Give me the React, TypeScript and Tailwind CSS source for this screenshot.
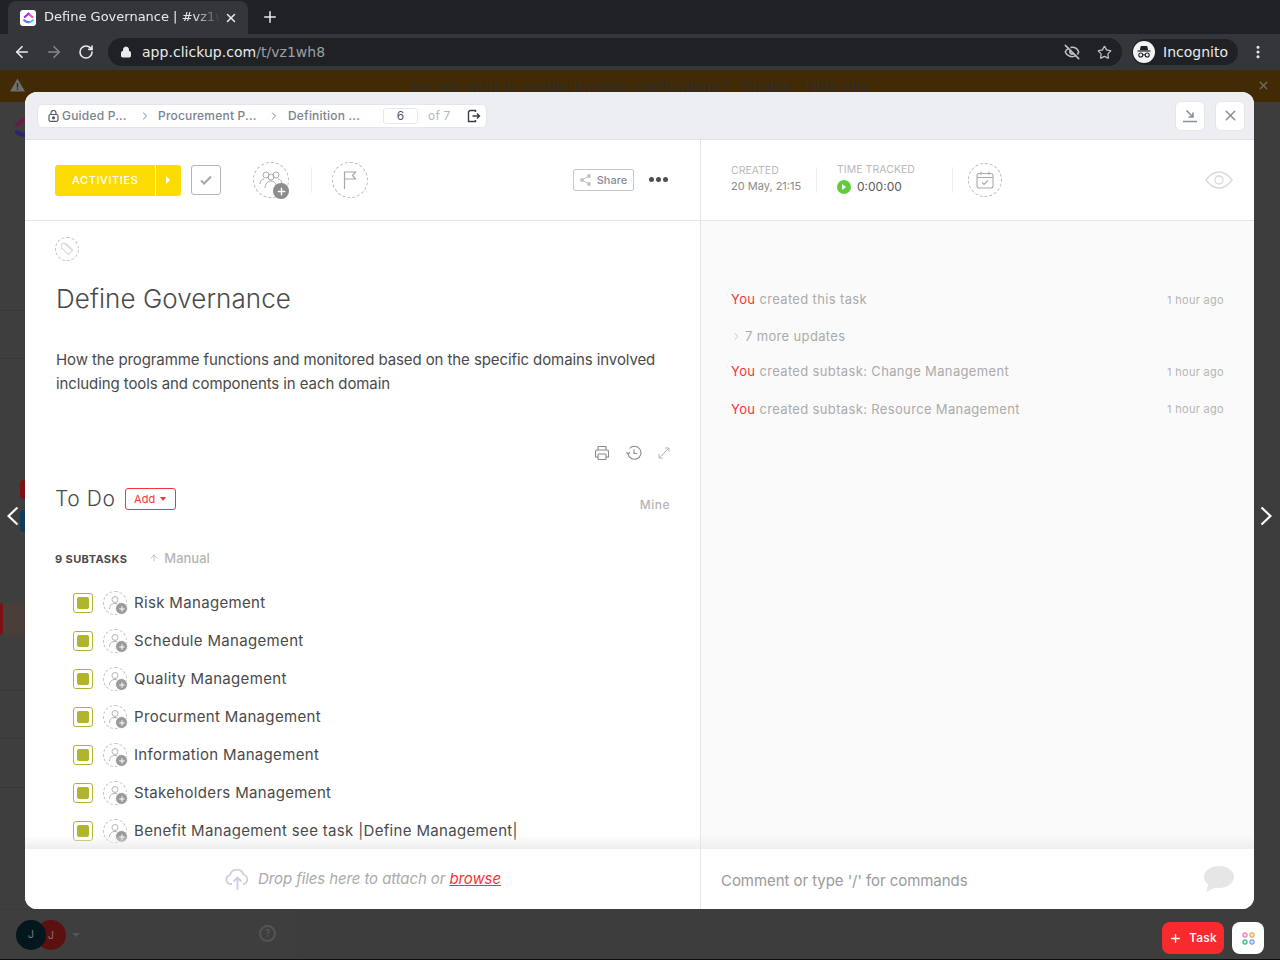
import { ArrowLeft, ArrowRight, ArrowUp, ChevronRight, EyeOff, Lock, MoreVertical, Plus, RotateCw, Star, X } from 'lucide-react';

const font = 'font-["Inter","Liberation_Sans",sans-serif]';

const subtasks = [
  'Risk Management',
  'Schedule Management',
  'Quality Management',
  'Procurment Management',
  'Information Management',
  'Stakeholders Management',
  'Benefit Management see task |Define Management|',
  'Cost Management',
];

function ClickUpLogo({ size }: { size: number }) {
  return (
    <svg width={size} height={size} viewBox="0 0 24 24" fill="none" strokeWidth="4" strokeLinecap="round" strokeLinejoin="round">
      <path d="M12 5 L19 11" stroke="#ff4f8b" />
      <path d="M5 11 L12 5" stroke="#8930fd" />
      <path d="M12 20.500 C15 20.500 18 19 20 17" stroke="#49ccf9" />
      <path d="M4 17 C6 19 9 20.500 12 20.500" stroke="#7b68ee" />
    </svg>
  );
}

function IncognitoIcon() {
  return (
    <svg width="22" height="22" viewBox="0 0 22 22">
      <circle cx="11" cy="11" r="11" fill="#f1f3f4" />
      <path d="M7.800 5h6.400l1 4.200H6.800z" fill="#202124" />
      <path d="M4.500 10h13" stroke="#202124" strokeWidth="1.200" />
      <circle cx="7.800" cy="14" r="2" fill="none" stroke="#202124" strokeWidth="1.100" />
      <circle cx="14.200" cy="14" r="2" fill="none" stroke="#202124" strokeWidth="1.100" />
      <path d="M9.800 13.800h2.400" stroke="#202124" strokeWidth="1" />
    </svg>
  );
}

function PersonPlus() {
  return (
    <div className="w-6 h-6 rounded-full border border-dashed border-[#c4c4c4] relative flex-shrink-0">
      <svg className="absolute left-[4px] top-[3px]" width="14" height="16" viewBox="0 0 14 16" fill="none" stroke="#b5b5b5" strokeWidth="1">
        <circle cx="7" cy="4.500" r="3" />
        <path d="M1.500 14c0-4 2.500-5.500 5.500-5.500 1 0 2 .2 2.600.6" />
      </svg>
      <div className="absolute -right-[1px] bottom-0 w-[11px] h-[11px] rounded-full bg-[#9a9a9a] flex items-center justify-center border border-white box-content -m-px">
        <Plus size={8} strokeWidth={3} color="#ffffff" />
      </div>
    </div>
  );
}

function SubtaskRow({ name }: { name: string }) {
  return (
    <div className="h-[38px] flex items-center pl-[48px] flex-shrink-0">
      <div className="w-5 h-5 rounded-[3px] border border-[#b1b52d] flex items-center justify-center flex-shrink-0">
        <div className="w-3 h-3 rounded-[2px] bg-[#b1b52d]" />
      </div>
      <div className="ml-[10px]">
        <PersonPlus />
      </div>
      <span className="ml-[7px] text-[15px] text-[#4a4a4a] whitespace-nowrap tracking-[0.33px]">{name}</span>
    </div>
  );
}

function ActivityRow({ name, time }: { name: string; time?: string }) {
  return (
    <div className="flex items-center justify-between text-[13px]">
      <div className="tracking-[0.35px]">
        <span className="text-[#f8333a]">You</span>
        <span className="text-[#ababab]"> {name}</span>
      </div>
      {time && <span className="text-[11px] text-[#b5b5b5] tracking-[0.3px]">{time}</span>}
    </div>
  );
}

function BrowserChrome() {
  return (
    <div className="flex-shrink-0 font-['DejaVu_Sans',sans-serif]">
      <div className="h-[34px] bg-[#202124] flex items-end pl-2">
        <div className="w-[240px] h-[33px] bg-[#35363a] rounded-t-[8px] flex items-center pl-3 pr-[10px]">
          <div className="w-4 h-4 rounded-[3px] bg-white flex items-center justify-center flex-shrink-0">
            <ClickUpLogo size={13} />
          </div>
          <span className="ml-2 mb-[2px] text-[13px] text-[#e8eaed] whitespace-nowrap overflow-hidden w-[176px] [mask-image:linear-gradient(to_right,black_85%,transparent)]">Define Governance | #vz1w</span>
          <X size={14} color="#e8eaed" strokeWidth={2.5} className="ml-auto" />
        </div>
        <Plus size={18} color="#e8eaed" strokeWidth={2} className="ml-[13px] mb-2" />
      </div>
      <div className="h-[36px] bg-[#35363a] flex items-center">
        <ArrowLeft size={18} color="#e8eaed" strokeWidth={2.2} className="ml-[13px]" />
        <ArrowRight size={18} color="#83868a" strokeWidth={2.2} className="ml-[14px]" />
        <RotateCw size={16} color="#e8eaed" strokeWidth={2.4} className="ml-[15px]" />
        <div className="ml-[14px] w-[1014px] h-7 rounded-full bg-[#202124] flex items-center pl-3 pr-[10px]">
          <Lock size={12} color="#e8eaed" fill="#e8eaed" />
          <span className="ml-[10px] text-[14px] text-[#e8eaed] whitespace-nowrap tracking-[0.03px]">app.clickup.com<span className="text-[#9aa0a6]">/t/vz1wh8</span></span>
          <EyeOff size={16} color="#bdc1c6" strokeWidth={2.4} className="ml-auto mr-px" />
          <Star size={15} color="#bdc1c6" strokeWidth={2} className="ml-[16px]" />
        </div>
        <div className="ml-[10px] w-[106px] h-[26px] rounded-full bg-[#202124] flex items-center pl-[1px]">
          <IncognitoIcon />
          <span className="ml-2 text-[14px] text-[#e8eaed]">Incognito</span>
        </div>
        <MoreVertical size={16} color="#e8eaed" strokeWidth={2.6} className="ml-[12px]" />
      </div>
    </div>
  );
}

function Backdrop() {
  return (
    <div className="flex-1 flex flex-col min-h-0">
      <div className="h-[32px] bg-[#412a04] flex items-center relative flex-shrink-0">
        <svg className="ml-[10px] -mt-[2px]" width="15" height="14" viewBox="0 0 15 14"><path d="M7.500 0.500 15 13.500H0z" fill="#6f6f6f" /><path d="M7.500 5v4.500M7.500 10.500v1.500" stroke="#412a04" strokeWidth="1.400" /></svg>
        <span className="absolute left-[411px] top-[6px] text-[15px] font-medium whitespace-nowrap text-[#2e2e2e] font-['Liberation_Sans',sans-serif] tracking-[0.45px]">Do you want to enable browser notifications?&nbsp;&nbsp; Enable &nbsp;&nbsp;Hide this</span>
        <X size={13} color="#6f6f6f" strokeWidth={2.400} className="ml-auto mr-[10px] -mt-[2px]" />
      </div>
      <div className="flex-1 flex min-h-0 border-b border-[#0f0f0f]">
        <div className="w-[298px] bg-[#3e3e3e] border-r border-[#3a3a3a] flex flex-col relative">
          <div className="absolute left-[14px] top-[12px]">
            <svg width="24" height="24" viewBox="0 0 24 24" fill="none" strokeWidth="4" strokeLinecap="round"><path d="M3 11 L12 4" stroke="#6a1a4a" /><path d="M3 18 C6 21 10 21 13 21" stroke="#2a2470" /></svg>
          </div>
          <div className="absolute left-0 top-[208px] w-full h-px bg-[#383838]" />
          <div className="absolute left-0 top-[256px] w-full h-px bg-[#383838]" />
          <div className="absolute left-0 top-[501px] w-full h-[32px] bg-[#4a3e3a]" />
          <div className="absolute left-0 top-[501px] w-[3px] h-[32px] rounded-r-[3px] bg-[#7a1214]" />
          <div className="absolute left-[20px] top-[378px] w-[10px] h-[19px] rounded-[4px] bg-[#7a1214]" />
          <div className="absolute left-[20px] top-[408px] w-[10px] h-[22px] rounded-[4px] bg-[#123a5a]" />
          <div className="absolute left-0 top-[588px] w-full h-px bg-[#383838]" />
          <div className="absolute left-0 top-[636px] w-full h-px bg-[#383838]" />
          <div className="absolute left-0 top-[685px] w-full h-px bg-[#383838]" />
          <div className="mt-auto h-[50px] flex items-center pl-[16px] border-t border-[#3a3a3a] relative">
            <div className="w-[30px] h-[30px] rounded-full bg-[#5c1010] absolute left-[36px] top-[10px] flex items-center justify-center text-[11px] text-[#8a6a6a]">J</div>
            <div className="w-[30px] h-[30px] rounded-full bg-[#03171f] relative flex items-center justify-center text-[11px] text-[#6a7a7a]">J</div>
            <div className="absolute left-[72px] top-[23px] w-0 h-0 border-x-[4px] border-x-transparent border-t-[4px] border-t-[#555555]" />
            <div className="absolute left-[259px] top-[15px] w-[17px] h-[17px] rounded-full border-2 border-[#555555] flex items-center justify-center text-[10px] font-bold text-[#555555]">?</div>
          </div>
        </div>
        <div className="flex-1 bg-[#3d3d3d]" />
      </div>
    </div>
  );
}

function HeaderBar() {
  return (
    <div className="h-[48px] bg-[#eceef2] border-b border-[#dfe1e5] flex items-center pl-3 pr-[9px] flex-shrink-0">
      <div className="w-[450px] h-[24px] bg-white rounded-[6px] border border-[#e4e6ea] flex items-center pl-[10px] text-[12px] font-medium text-[#7c828d] whitespace-nowrap tracking-[0.2px]">
        <svg width="11" height="12" viewBox="0 0 11 12" fill="none" stroke="#54585f" strokeWidth="1.200"><rect x="1" y="4.500" width="9" height="6.800" rx="1.500" /><path d="M3 4.500V3a2.500 2.500 0 0 1 5 0v1.500" /><circle cx="5.500" cy="7.800" r="1" fill="#54585f" /></svg>
        <span className="ml-[3px] w-[66px]">Guided P...</span>
        <ChevronRight size={12} color="#7c828d" className="ml-[11px]" />
        <span className="ml-[7px] w-[100px]">Procurement P...</span>
        <ChevronRight size={12} color="#7c828d" className="ml-[10px]" />
        <span className="ml-[8px] w-[73px]">Definition ...</span>
        <div className="ml-[22px] w-[35px] h-4 rounded-[3px] border border-[#e6e8ec] flex items-center justify-center text-[#54585f] font-normal">6</div>
        <span className="ml-[10px] text-[#b5b8bd] font-normal w-[24px]">of 7</span>
        <svg className="ml-[15px]" width="14" height="14" viewBox="0 0 14 14" fill="none" stroke="#3c3f45" strokeWidth="1.400"><path d="M8.500 3V1.500H2.800L1.500 3v9.500h7V11" /><path d="M5.500 7h7M10 4.500 12.500 7 10 9.500" /></svg>
      </div>
      <div className="ml-auto flex gap-[10px]">
        <div className="w-[30px] h-[30px] bg-white rounded-[6px] border border-[#e4e6ea] flex items-center justify-center">
          <svg width="14" height="14" viewBox="0 0 14 14" fill="none" stroke="#8b90a0" strokeWidth="1.600"><path d="M3.500 1.500 10 8M10 3.500V8H5.500" /><path d="M0 12.500h14" /></svg>
        </div>
        <div className="w-[30px] h-[30px] bg-white rounded-[6px] border border-[#e4e6ea] flex items-center justify-center">
          <X size={17} color="#8b90a0" strokeWidth={2.200} />
        </div>
      </div>
    </div>
  );
}

function LeftActions() {
  return (
    <div className="h-[81px] border-b border-[#e5e5e5] flex items-center pl-[30px] pr-[32px] flex-shrink-0">
      <div className="w-[126px] h-[31px] bg-[#fcdb03] rounded-[3px] flex items-center text-white text-[11px] font-medium tracking-[0.6px]">
        <span className="w-[101px] pl-[17px] border-r border-white h-full flex items-center">ACTIVITIES</span>
        <div className="ml-[10px] w-0 h-0 border-y-[4px] border-y-transparent border-l-[4px] border-l-white" />
      </div>
      <div className="ml-[10px] w-[30px] h-[30px] rounded-[3px] border border-[#b4b4b4] flex items-center justify-center">
        <svg width="12" height="10" viewBox="0 0 12 10" fill="none" stroke="#a8a8a8" strokeWidth="2"><path d="M1 5.500 4.200 8.500 11 1.500" /></svg>
      </div>
      <div className="ml-[32px] w-9 h-9 rounded-full border border-dashed border-[#b9b9b9] relative flex items-center justify-center">
        <svg width="24" height="20" viewBox="0 0 24 20" fill="none" stroke="#ababab" strokeWidth="1"><circle cx="7" cy="5" r="3" /><circle cx="17" cy="5" r="3" /><circle cx="12" cy="7" r="3" /><path d="M1 14c0-3 2-5 4-5M23 14c0-3-2-5-4-5M6 18c0-4 3-7 6-7s6 3 6 7" /></svg>
        <div className="absolute -right-[1px] -bottom-[2px] w-4 h-4 rounded-full bg-[#8c8c8c] flex items-center justify-center">
          <Plus size={11} strokeWidth={3} color="#ffffff" />
        </div>
      </div>
      <div className="ml-[22px] w-px h-[26px] bg-[#eeeeee]" />
      <div className="ml-[20px] w-9 h-9 rounded-full border border-dashed border-[#b9b9b9] flex items-center justify-center">
        <svg width="14" height="18" viewBox="0 0 14 18" fill="none" stroke="#a8a8a8" strokeWidth="1.200"><path d="M1.500 18V1h11l-3 3.500 3 3.500h-11" /></svg>
      </div>
      <div className="ml-auto w-[61px] h-[22px] rounded-[2px] border border-[#c5c8ce] flex items-center justify-center gap-[6px] text-[11px] font-medium text-[#868b95]">
        <svg width="11" height="12" viewBox="0 0 11 12" fill="#c0c3c8"><circle cx="2" cy="6" r="2" /><circle cx="9" cy="2" r="2" /><circle cx="9" cy="10" r="2" /><path d="M2 6 9 2M2 6l7 4" stroke="#c0c3c8" /></svg>
        Share
      </div>
      <div className="ml-[15px] mb-[2px] flex gap-[2px]">
        <div className="w-[5px] h-[5px] rounded-full bg-[#4e4e4e]" />
        <div className="w-[5px] h-[5px] rounded-full bg-[#4e4e4e]" />
        <div className="w-[5px] h-[5px] rounded-full bg-[#4e4e4e]" />
      </div>
    </div>
  );
}

function LeftPanel() {
  return (
    <div className="w-[676px] border-r border-[#e5e5e5] flex flex-col min-h-0 flex-shrink-0">
      <LeftActions />
      <div className="flex-1 min-h-0 overflow-hidden relative flex flex-col">
        <div className="ml-[30px] mt-[16px] w-6 h-6 rounded-full border border-dashed border-[#c0c0c0] flex items-center justify-center flex-shrink-0">
          <svg width="16" height="16" viewBox="0 0 16 16" fill="none" stroke="#dcdcdc" strokeWidth="1.100"><path d="M2.500 2.500h4.500l7 6.500-4.500 4.500-7-6.500z" /><path d="M4.500 1.500 13 9.500" /></svg>
        </div>
        <h1 className="ml-[31px] mt-[20px] text-[26px] leading-[36px] text-[#4a4a4a] font-light whitespace-nowrap flex-shrink-0 tracking-[0.06px]">Define Governance</h1>
        <p className="ml-[31px] mt-[31px] text-[15px] leading-[24px] text-[#4a4a4a] w-[620px] flex-shrink-0 tracking-[-0.09px]">How the programme functions and monitored based on the specific domains involved including tools and components in each domain</p>
        <div className="mt-[48px] h-[18px] flex items-center justify-end pr-[30px] gap-[16px] flex-shrink-0">
          <svg width="16" height="16" viewBox="0 0 16 16" fill="none" stroke="#8a8a8a" strokeWidth="1.100"><path d="M4 5V1.500h8V5M4 12H1.500V6.500A1.500 1.500 0 0 1 3 5h10a1.500 1.500 0 0 1 1.500 1.500V12H12" /><rect x="4" y="9" width="8" height="5.500" rx="1" /></svg>
          <svg width="16" height="16" viewBox="0 0 16 16" fill="none" stroke="#8a8a8a" strokeWidth="1.100"><path d="M2 8.500A6.500 6.500 0 1 0 3.500 3.500" /><path d="M8 4.500V8.500H11" /><path d="M0.500 7 2 9 4 7.500" /></svg>
          <svg width="12" height="12" viewBox="0 0 12 12" fill="none" stroke="#b8b8b8" strokeWidth="1"><path d="M1 11 11 1M7 1h4v4M1 7v4h4" /></svg>
        </div>
        <div className="mt-[22px] h-[30px] pl-[30px] pr-[30px] flex items-center flex-shrink-0">
          <span className="text-[21px] font-light text-[#4a4a4a] tracking-[0.6px]">To Do</span>
          <div className="ml-[9px] w-[51px] h-[22px] rounded-[3px] border border-[#f8333a] flex items-center justify-center gap-[5px] text-[11px] text-[#f8333a]">
            Add
            <div className="w-0 h-0 border-x-[3.500px] border-x-transparent border-t-[4px] border-t-[#f8333a]" />
          </div>
          <span className="ml-auto mt-[11px] text-[12px] font-medium text-[#b5b5b5] tracking-[0.5px]">Mine</span>
        </div>
        <div className="mt-[37px] h-[16px] pl-[30px] flex items-center flex-shrink-0">
          <span className="text-[11px] font-bold text-[#4a4a4a] tracking-[0.4px]">9 SUBTASKS</span>
          <ArrowUp size={10} color="#b5b5b5" strokeWidth={2} className="ml-[22px] mb-[3px]" />
          <span className="ml-[5px] text-[13px] font-medium text-[#b5b5b5]">Manual</span>
        </div>
        <div className="mt-[17px] flex flex-col flex-shrink-0">
          {subtasks.map((s) => <SubtaskRow key={s} name={s} />)}
        </div>
        <div className="absolute left-0 right-0 bottom-0 h-[14px] bg-gradient-to-b from-[#ffffff00] to-[#eeeeee]" />
      </div>
      <div className="h-[60px] bg-white flex items-center pl-[200px] flex-shrink-0">
        <svg width="25" height="21" viewBox="0 0 25 21" fill="none" stroke="#cdd0e0" strokeWidth="1.800"><path d="M7 15H5.500A4.500 4.500 0 0 1 5 6.100 7 7 0 0 1 18.500 5.500 5 5 0 0 1 19 15h-1" /><path d="M12.500 21V9M8.500 12.500l4-4 4 4" /></svg>
        <span className="ml-[8px] text-[15px] italic text-[#aaaaaa] whitespace-nowrap tracking-[-0.1px]">Drop files here to attach or <span className="text-[#f8333a] underline">browse</span></span>
      </div>
    </div>
  );
}

function RightPanel() {
  return (
    <div className="flex-1 flex flex-col min-h-0">
      <div className="h-[81px] border-b border-[#e5e5e5] flex items-center pl-[30px] pr-[21px] flex-shrink-0">
        <div className="w-[85px] -mt-[2px]">
          <div className="text-[10.500px] leading-[14px] text-[#b9b9b9]">CREATED</div>
          <div className="text-[11px] leading-[16px] text-[#8a8a8a] whitespace-nowrap">20 May, 21:15</div>
        </div>
        <div className="w-px h-[26px] bg-[#eeeeee]" />
        <div className="ml-[20px] w-[115px]">
          <div className="text-[10.500px] leading-[14px] text-[#b9b9b9] -mt-[2px] whitespace-nowrap tracking-[0.05px]">TIME TRACKED</div>
          <div className="flex items-center mt-[1px]">
            <div className="w-[14px] h-[14px] rounded-full bg-[#62cb3f] flex items-center justify-center">
              <div className="w-0 h-0 border-y-[3px] border-y-transparent border-l-[4px] border-l-white" />
            </div>
            <span className="ml-[6px] text-[12px] text-[#5a5a5a]">0:00:00</span>
          </div>
        </div>
        <div className="w-px h-[26px] bg-[#eeeeee]" />
        <div className="ml-[15px] w-[34px] h-[34px] rounded-full border border-dashed border-[#b9b9b9] flex items-center justify-center">
          <svg width="18" height="18" viewBox="0 0 18 18" fill="none" stroke="#ababab" strokeWidth="1.100"><rect x="1" y="2.500" width="16" height="14.500" rx="2" /><path d="M1 6.500h16M5 0.500v3.500M13 0.500v3.500M6 11.500l2 2 4-4" /></svg>
        </div>
        <svg className="ml-auto" width="28" height="18" viewBox="0 0 28 18" fill="none" stroke="#d9d9d9" strokeWidth="1.300"><path d="M1 9C5 3.500 9.500 1 14 1s9 2.500 13 8c-4 5.500-8.500 8-13 8S5 14.500 1 9z" /><circle cx="14" cy="9" r="4" /></svg>
      </div>
      <div className="flex-1 min-h-0 bg-[#fafafa] pl-[30px] pr-[30px] pt-[69px] relative">
        <ActivityRow name="created this task" time="1 hour ago" />
        <div className="mt-[17px] flex items-center text-[13px] text-[#ababab] tracking-[0.35px]">
          <ChevronRight size={11} color="#b9b9b9" />
          <span className="ml-[3px]">7 more updates</span>
        </div>
        <div className="mt-[16px]"><ActivityRow name="created subtask: Change Management" time="1 hour ago" /></div>
        <div className="mt-[18px]"><ActivityRow name="created subtask: Resource Management" time="1 hour ago" /></div>
        <div className="absolute left-0 right-0 bottom-0 h-[14px] bg-gradient-to-b from-[#ffffff00] to-[#eeeeee]" />
      </div>
      <div className="h-[60px] bg-white flex items-center pl-[20px] pr-[20px] flex-shrink-0">
        <span className="mt-[4px] text-[15px] text-[#9a9a9a] tracking-[-0.06px]">Comment or type &#39;/&#39; for commands</span>
        <svg className="ml-auto" width="30" height="26" viewBox="0 0 30 26" fill="#e6e6e6"><ellipse cx="15" cy="11" rx="15" ry="11" /><path d="M5 17 2 26l10-5z" /></svg>
      </div>
    </div>
  );
}

export default function App() {
  return (
    <div className={`w-[1280px] h-[960px] overflow-hidden relative flex flex-col bg-[#3d3d3d] ${font}`}>
      <BrowserChrome />
      <Backdrop />

      {/* task modal sits over the dimmed app */}
      <div className="absolute left-[25px] top-[92px] w-[1229px] h-[817px] bg-white rounded-[12px] overflow-hidden flex flex-col">
        <HeaderBar />
        <div className="flex-1 flex min-h-0">
          <LeftPanel />
          <RightPanel />
        </div>
      </div>

      <svg className="absolute left-[7px] top-[506px]" width="12" height="20" viewBox="0 0 12 20" fill="none" stroke="#ffffff" strokeWidth="2.200"><path d="M10.500 1.500 1.500 10l9 8.500" /></svg>
      <svg className="absolute left-[1260px] top-[506px]" width="12" height="20" viewBox="0 0 12 20" fill="none" stroke="#ffffff" strokeWidth="2.200"><path d="M1.500 1.500 10.500 10l-9 8.500" /></svg>

      <div className="absolute left-[1162px] top-[922px] w-[62px] h-[32px] rounded-[8px] bg-[#f72b2e] flex items-center justify-center gap-[7px] text-[12px] font-medium text-white tracking-[0.3px]">
        <Plus size={13} strokeWidth={2.600} color="#ffffff" />
        Task
      </div>
      <div className="absolute left-[1232px] top-[922px] w-[32px] h-[32px] rounded-[8px] bg-white flex items-center justify-center">
        <svg width="13" height="13" viewBox="0 0 13 13" stroke="#ffffff" strokeWidth="1">
          <circle cx="3" cy="3" r="2.700" fill="#ee7fb8" stroke="none" />
          <circle cx="10" cy="3" r="2.700" fill="#f2a84c" stroke="none" />
          <circle cx="3" cy="10" r="2.700" fill="#3fb98a" stroke="none" />
          <circle cx="10" cy="10" r="2.700" fill="#6fa0f5" stroke="none" />
          <path d="M1.500 3h3M3 1.500v3M8.500 3h3M10 1.500v3M1.500 10h3M3 8.500v3M8.500 10h3M10 8.500v3" />
        </svg>
      </div>
    </div>
  );
}
